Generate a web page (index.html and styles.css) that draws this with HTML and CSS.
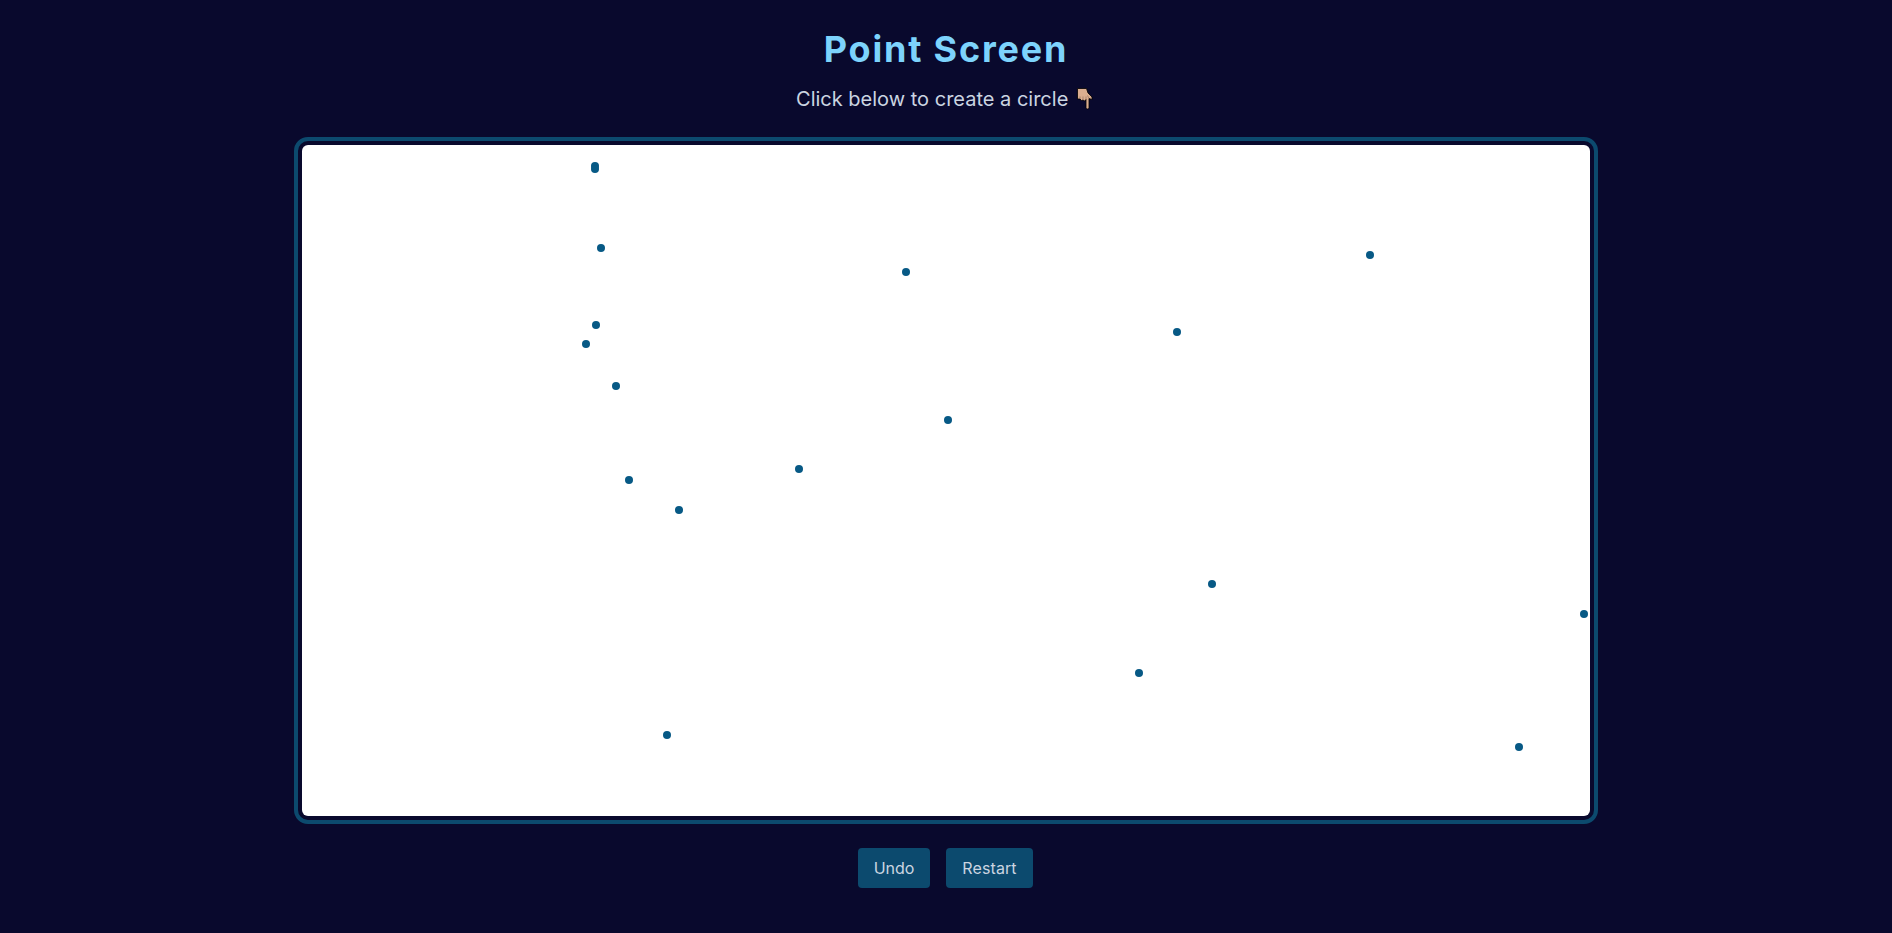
FILE: index.html
```html
<!DOCTYPE html>
<html lang="en"><head><meta charset="utf-8"><title>Point Screen</title><link rel="stylesheet" href="styles.css"></head>
<body>
<header class="header"><h1 class="title">Point Screen</h1>
<p class="subtitle">Click below to create a circle <svg class="hand" viewBox="0 0 22 24"><path fill="#dbae90" stroke="#000" stroke-width=".8" stroke-linejoin="round" d="M3.500 1.500h9l1.500 4.500 4 4v2.500l-3-1v9q0 1.500-1.500 1.500T12 20.500V12.500l-1.500 1.500L9 13l-1.500.5-1.500-1.500-2.500 0z"/><path fill="none" stroke="#8a6754" stroke-width=".6" d="M6 9.500v2.500M9 9.500v3.500M12 9.500v3.500M13.500 8.500l1.500 3"/></svg></p></header>
<main class="frame"><svg class="board" viewBox="0 0 1288 671">
<g class="points"><circle cx="293" cy="21" r="4"/><circle cx="293" cy="24" r="4"/><circle cx="299" cy="103" r="4"/><circle cx="294" cy="180" r="4"/><circle cx="284" cy="199" r="4"/><circle cx="314" cy="241" r="4"/><circle cx="327" cy="335" r="4"/><circle cx="377" cy="365" r="4"/><circle cx="497" cy="324" r="4"/><circle cx="646" cy="275" r="4"/><circle cx="604" cy="127" r="4"/><circle cx="875" cy="187" r="4"/><circle cx="1068" cy="110" r="4"/><circle cx="910" cy="439" r="4"/><circle cx="837" cy="528" r="4"/><circle cx="1282" cy="469" r="4"/><circle cx="1217" cy="602" r="4"/><circle cx="365" cy="590" r="4"/></g></svg></main>
<div class="actions"><button class="button undo">Undo</button><button class="button restart">Restart</button></div>
</body></html>
```
FILE: styles.css
```css
* { box-sizing: border-box; }
body { margin: 0; height: 933px; padding-top: 24px; background: #09092d; font-family: Inter, sans-serif; display: flex; flex-direction: column; align-items: center; overflow: hidden; }
.header { text-align: center; height: 113px; }
.title { margin: 0; font-size: 36px; line-height: 50px; letter-spacing: 1.8px; color: #7dd3fc; }
.subtitle { margin: 10px 0 0; font-size: 20px; line-height: 30px; color: #cbd5e1; }
.hand { width: 22px; height: 24px; vertical-align: -5px; }
.frame { width: 1304px; height: 687px; flex: none; border: 4px solid #0c4a6e; border-radius: 14px; padding: 4px; }
.board { display: block; width: 100%; height: 100%; background: #fff; border-radius: 6px; }
.points { fill: #075985; }
.actions { display: flex; gap: 16px; margin-top: 24px; padding-right: 1px; }
.button { font: 16px/24px Inter, sans-serif; padding: 8px 0; border: 0; border-radius: 4px; background: #0c4a6e; color: #cbd5e1; }
.undo { width: 72px; }
.restart { width: 87px; letter-spacing: .1px; }
```
